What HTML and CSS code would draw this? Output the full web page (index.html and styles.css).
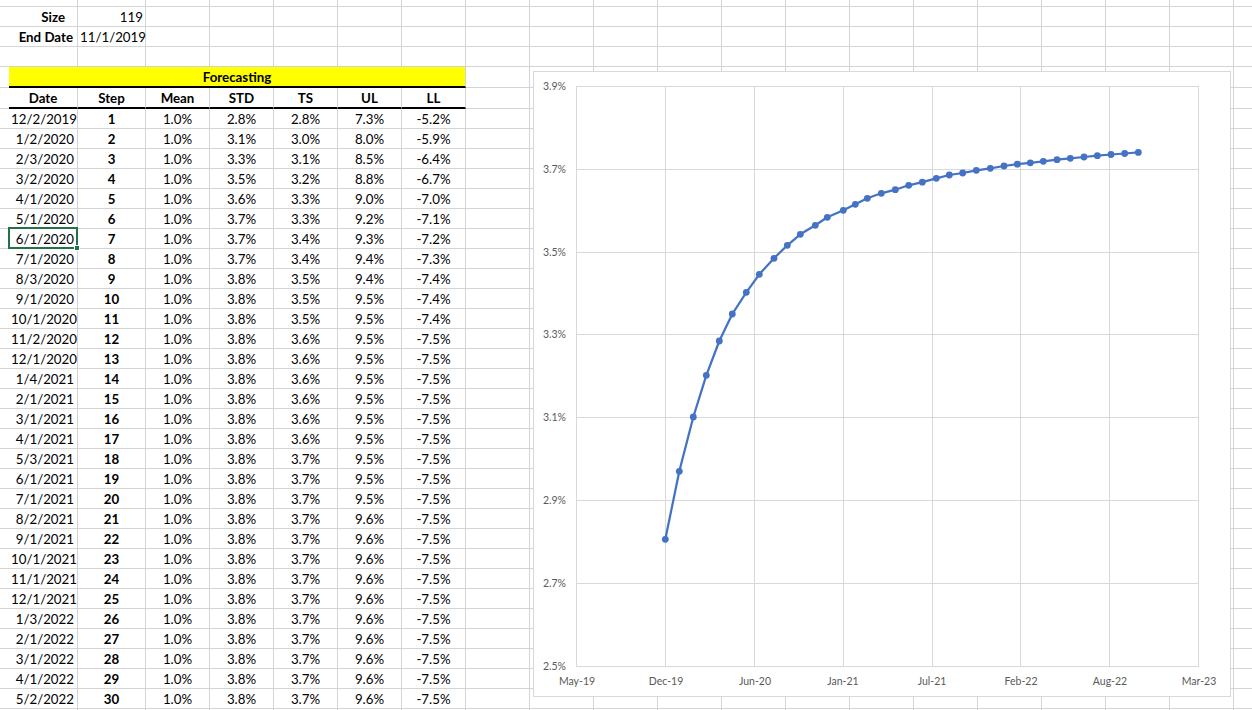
FILE: index.html
```html
<!DOCTYPE html>
<html>
<head>
<meta charset="utf-8">
<title>Forecasting</title>
<link rel="stylesheet" href="styles.css">
</head>
<body>
<div class="sheet">
  <div class="row r0"><div class="c0"></div><div class="c d"></div><div class="c s"></div><div class="c"></div><div class="c"></div><div class="c"></div><div class="c"></div><div class="c"></div><div class="rest"></div></div>
  <div class="row"><div class="c0"></div><div class="c d lbl">Size</div><div class="c s val">119</div><div class="c"></div><div class="c"></div><div class="c"></div><div class="c"></div><div class="c"></div><div class="rest"></div></div>
  <div class="row"><div class="c0"></div><div class="c d lbl2">End Date</div><div class="c s val">11/1/2019</div><div class="c"></div><div class="c"></div><div class="c"></div><div class="c"></div><div class="c"></div><div class="rest"></div></div>
  <div class="row"><div class="c0"></div><div class="c d"></div><div class="c s"></div><div class="c"></div><div class="c"></div><div class="c"></div><div class="c"></div><div class="c"></div><div class="rest"></div></div>
  <div class="row tall"><div class="c0"></div><div class="c fc">Forecasting</div><div class="rest"></div></div>
  <div class="row tall"><div class="c0"></div><div class="c h hd">Date</div><div class="c h hs">Step</div><div class="c h">Mean</div><div class="c h">STD</div><div class="c h">TS</div><div class="c h">UL</div><div class="c h">LL</div><div class="rest"></div></div>
  <div class="row"><div class="c0"></div><div class="c d">12/2/2019</div><div class="c s">1</div><div class="c">1.0%</div><div class="c">2.8%</div><div class="c">2.8%</div><div class="c">7.3%</div><div class="c">-5.2%</div><div class="rest"></div></div>
  <div class="row"><div class="c0"></div><div class="c d">1/2/2020</div><div class="c s">2</div><div class="c">1.0%</div><div class="c">3.1%</div><div class="c">3.0%</div><div class="c">8.0%</div><div class="c">-5.9%</div><div class="rest"></div></div>
  <div class="row"><div class="c0"></div><div class="c d">2/3/2020</div><div class="c s">3</div><div class="c">1.0%</div><div class="c">3.3%</div><div class="c">3.1%</div><div class="c">8.5%</div><div class="c">-6.4%</div><div class="rest"></div></div>
  <div class="row"><div class="c0"></div><div class="c d">3/2/2020</div><div class="c s">4</div><div class="c">1.0%</div><div class="c">3.5%</div><div class="c">3.2%</div><div class="c">8.8%</div><div class="c">-6.7%</div><div class="rest"></div></div>
  <div class="row"><div class="c0"></div><div class="c d">4/1/2020</div><div class="c s">5</div><div class="c">1.0%</div><div class="c">3.6%</div><div class="c">3.3%</div><div class="c">9.0%</div><div class="c">-7.0%</div><div class="rest"></div></div>
  <div class="row"><div class="c0"></div><div class="c d">5/1/2020</div><div class="c s">6</div><div class="c">1.0%</div><div class="c">3.7%</div><div class="c">3.3%</div><div class="c">9.2%</div><div class="c">-7.1%</div><div class="rest"></div></div>
  <div class="row"><div class="c0"></div><div class="c d sel">6/1/2020</div><div class="c s">7</div><div class="c">1.0%</div><div class="c">3.7%</div><div class="c">3.4%</div><div class="c">9.3%</div><div class="c">-7.2%</div><div class="rest"></div></div>
  <div class="row"><div class="c0"></div><div class="c d">7/1/2020</div><div class="c s">8</div><div class="c">1.0%</div><div class="c">3.7%</div><div class="c">3.4%</div><div class="c">9.4%</div><div class="c">-7.3%</div><div class="rest"></div></div>
  <div class="row"><div class="c0"></div><div class="c d">8/3/2020</div><div class="c s">9</div><div class="c">1.0%</div><div class="c">3.8%</div><div class="c">3.5%</div><div class="c">9.4%</div><div class="c">-7.4%</div><div class="rest"></div></div>
  <div class="row"><div class="c0"></div><div class="c d">9/1/2020</div><div class="c s">10</div><div class="c">1.0%</div><div class="c">3.8%</div><div class="c">3.5%</div><div class="c">9.5%</div><div class="c">-7.4%</div><div class="rest"></div></div>
  <div class="row"><div class="c0"></div><div class="c d">10/1/2020</div><div class="c s">11</div><div class="c">1.0%</div><div class="c">3.8%</div><div class="c">3.5%</div><div class="c">9.5%</div><div class="c">-7.4%</div><div class="rest"></div></div>
  <div class="row"><div class="c0"></div><div class="c d">11/2/2020</div><div class="c s">12</div><div class="c">1.0%</div><div class="c">3.8%</div><div class="c">3.6%</div><div class="c">9.5%</div><div class="c">-7.5%</div><div class="rest"></div></div>
  <div class="row"><div class="c0"></div><div class="c d">12/1/2020</div><div class="c s">13</div><div class="c">1.0%</div><div class="c">3.8%</div><div class="c">3.6%</div><div class="c">9.5%</div><div class="c">-7.5%</div><div class="rest"></div></div>
  <div class="row"><div class="c0"></div><div class="c d">1/4/2021</div><div class="c s">14</div><div class="c">1.0%</div><div class="c">3.8%</div><div class="c">3.6%</div><div class="c">9.5%</div><div class="c">-7.5%</div><div class="rest"></div></div>
  <div class="row"><div class="c0"></div><div class="c d">2/1/2021</div><div class="c s">15</div><div class="c">1.0%</div><div class="c">3.8%</div><div class="c">3.6%</div><div class="c">9.5%</div><div class="c">-7.5%</div><div class="rest"></div></div>
  <div class="row"><div class="c0"></div><div class="c d">3/1/2021</div><div class="c s">16</div><div class="c">1.0%</div><div class="c">3.8%</div><div class="c">3.6%</div><div class="c">9.5%</div><div class="c">-7.5%</div><div class="rest"></div></div>
  <div class="row"><div class="c0"></div><div class="c d">4/1/2021</div><div class="c s">17</div><div class="c">1.0%</div><div class="c">3.8%</div><div class="c">3.6%</div><div class="c">9.5%</div><div class="c">-7.5%</div><div class="rest"></div></div>
  <div class="row"><div class="c0"></div><div class="c d">5/3/2021</div><div class="c s">18</div><div class="c">1.0%</div><div class="c">3.8%</div><div class="c">3.7%</div><div class="c">9.5%</div><div class="c">-7.5%</div><div class="rest"></div></div>
  <div class="row"><div class="c0"></div><div class="c d">6/1/2021</div><div class="c s">19</div><div class="c">1.0%</div><div class="c">3.8%</div><div class="c">3.7%</div><div class="c">9.5%</div><div class="c">-7.5%</div><div class="rest"></div></div>
  <div class="row"><div class="c0"></div><div class="c d">7/1/2021</div><div class="c s">20</div><div class="c">1.0%</div><div class="c">3.8%</div><div class="c">3.7%</div><div class="c">9.5%</div><div class="c">-7.5%</div><div class="rest"></div></div>
  <div class="row"><div class="c0"></div><div class="c d">8/2/2021</div><div class="c s">21</div><div class="c">1.0%</div><div class="c">3.8%</div><div class="c">3.7%</div><div class="c">9.6%</div><div class="c">-7.5%</div><div class="rest"></div></div>
  <div class="row"><div class="c0"></div><div class="c d">9/1/2021</div><div class="c s">22</div><div class="c">1.0%</div><div class="c">3.8%</div><div class="c">3.7%</div><div class="c">9.6%</div><div class="c">-7.5%</div><div class="rest"></div></div>
  <div class="row"><div class="c0"></div><div class="c d">10/1/2021</div><div class="c s">23</div><div class="c">1.0%</div><div class="c">3.8%</div><div class="c">3.7%</div><div class="c">9.6%</div><div class="c">-7.5%</div><div class="rest"></div></div>
  <div class="row"><div class="c0"></div><div class="c d">11/1/2021</div><div class="c s">24</div><div class="c">1.0%</div><div class="c">3.8%</div><div class="c">3.7%</div><div class="c">9.6%</div><div class="c">-7.5%</div><div class="rest"></div></div>
  <div class="row"><div class="c0"></div><div class="c d">12/1/2021</div><div class="c s">25</div><div class="c">1.0%</div><div class="c">3.8%</div><div class="c">3.7%</div><div class="c">9.6%</div><div class="c">-7.5%</div><div class="rest"></div></div>
  <div class="row"><div class="c0"></div><div class="c d">1/3/2022</div><div class="c s">26</div><div class="c">1.0%</div><div class="c">3.8%</div><div class="c">3.7%</div><div class="c">9.6%</div><div class="c">-7.5%</div><div class="rest"></div></div>
  <div class="row"><div class="c0"></div><div class="c d">2/1/2022</div><div class="c s">27</div><div class="c">1.0%</div><div class="c">3.8%</div><div class="c">3.7%</div><div class="c">9.6%</div><div class="c">-7.5%</div><div class="rest"></div></div>
  <div class="row"><div class="c0"></div><div class="c d">3/1/2022</div><div class="c s">28</div><div class="c">1.0%</div><div class="c">3.8%</div><div class="c">3.7%</div><div class="c">9.6%</div><div class="c">-7.5%</div><div class="rest"></div></div>
  <div class="row"><div class="c0"></div><div class="c d">4/1/2022</div><div class="c s">29</div><div class="c">1.0%</div><div class="c">3.8%</div><div class="c">3.7%</div><div class="c">9.6%</div><div class="c">-7.5%</div><div class="rest"></div></div>
  <div class="row"><div class="c0"></div><div class="c d">5/2/2022</div><div class="c s">30</div><div class="c">1.0%</div><div class="c">3.8%</div><div class="c">3.7%</div><div class="c">9.6%</div><div class="c">-7.5%</div><div class="rest"></div></div>
  <div class="row"><div class="c0"></div><div class="c d"></div><div class="c s"></div><div class="c"></div><div class="c"></div><div class="c"></div><div class="c"></div><div class="c"></div><div class="rest"></div></div>

  <div class="chart">
    <svg class="plot" viewBox="533 71 699 627" width="699" height="627">
      <rect x="533.5" y="71.5" width="697" height="625" fill="#fff" stroke="#d9d9d9"/>
      <g stroke="#d9d9d9" stroke-width="1" fill="none">
        <rect x="576.5" y="86.5" width="622" height="580"/>
        <line x1="576.5" y1="169.5" x2="1198.5" y2="169.5"/>
        <line x1="576.5" y1="252.5" x2="1198.5" y2="252.5"/>
        <line x1="576.5" y1="334.5" x2="1198.5" y2="334.5"/>
        <line x1="576.5" y1="417.5" x2="1198.5" y2="417.5"/>
        <line x1="576.5" y1="500.5" x2="1198.5" y2="500.5"/>
        <line x1="576.5" y1="583.5" x2="1198.5" y2="583.5"/>
        <line x1="665.5" y1="86.5" x2="665.5" y2="666.5"/>
        <line x1="754.5" y1="86.5" x2="754.5" y2="666.5"/>
        <line x1="843.5" y1="86.5" x2="843.5" y2="666.5"/>
        <line x1="932.5" y1="86.5" x2="932.5" y2="666.5"/>
        <line x1="1020.5" y1="86.5" x2="1020.5" y2="666.5"/>
        <line x1="1109.5" y1="86.5" x2="1109.5" y2="666.5"/>
      </g>
      <g class="ylab">
        <text x="566" y="90">3.9%</text>
        <text x="566" y="172.5">3.7%</text>
        <text x="566" y="255.5">3.5%</text>
        <text x="566" y="337.5">3.3%</text>
        <text x="566" y="420.5">3.1%</text>
        <text x="566" y="503.5">2.9%</text>
        <text x="566" y="586.5">2.7%</text>
        <text x="566" y="669.5">2.5%</text>
      </g>
      <g class="xlab">
        <text x="577" y="685">May-19</text>
        <text x="666" y="685">Dec-19</text>
        <text x="755" y="685">Jun-20</text>
        <text x="843" y="685">Jan-21</text>
        <text x="932" y="685">Jul-21</text>
        <text x="1021" y="685">Feb-22</text>
        <text x="1110" y="685">Aug-22</text>
        <text x="1199" y="685">Mar-23</text>
      </g>
      <polyline class="series" points="665.3,539.3 679.3,471.3 693.3,417 706.3,375.3 719.3,341 732.3,314 746.3,292.3 759.3,274.3 774,258.3 787.3,245.3 800.3,234.3 815.3,225.3 827.3,217.3 843.3,210.3 855.3,204.3 867.3,198.3 881.3,193.3 895.3,189.7 908.7,185.3 922.3,182.2 936.3,178.3 949.3,175 962.7,173 976.3,170.3 990.3,168.3 1004,166 1017.3,164.2 1030.3,162.8 1043.3,161.3 1057,159.7 1070.3,158.3 1084,157 1097.3,155.7 1111,154.5 1124.7,153.5 1138.3,152.4"/>
      <g class="dots">
        <circle cx="665.3" cy="539.3" r="3.4"/><circle cx="679.3" cy="471.3" r="3.4"/><circle cx="693.3" cy="417" r="3.4"/><circle cx="706.3" cy="375.3" r="3.4"/><circle cx="719.3" cy="341" r="3.4"/><circle cx="732.3" cy="314" r="3.4"/><circle cx="746.3" cy="292.3" r="3.4"/><circle cx="759.3" cy="274.3" r="3.4"/><circle cx="774" cy="258.3" r="3.4"/><circle cx="787.3" cy="245.3" r="3.4"/><circle cx="800.3" cy="234.3" r="3.4"/><circle cx="815.3" cy="225.3" r="3.4"/><circle cx="827.3" cy="217.3" r="3.4"/><circle cx="843.3" cy="210.3" r="3.4"/><circle cx="855.3" cy="204.3" r="3.4"/><circle cx="867.3" cy="198.3" r="3.4"/><circle cx="881.3" cy="193.3" r="3.4"/><circle cx="895.3" cy="189.7" r="3.4"/><circle cx="908.7" cy="185.3" r="3.4"/><circle cx="922.3" cy="182.2" r="3.4"/><circle cx="936.3" cy="178.3" r="3.4"/><circle cx="949.3" cy="175" r="3.4"/><circle cx="962.7" cy="173" r="3.4"/><circle cx="976.3" cy="170.3" r="3.4"/><circle cx="990.3" cy="168.3" r="3.4"/><circle cx="1004" cy="166" r="3.4"/><circle cx="1017.3" cy="164.2" r="3.4"/><circle cx="1030.3" cy="162.8" r="3.4"/><circle cx="1043.3" cy="161.3" r="3.4"/><circle cx="1057" cy="159.7" r="3.4"/><circle cx="1070.3" cy="158.3" r="3.4"/><circle cx="1084" cy="157" r="3.4"/><circle cx="1097.3" cy="155.7" r="3.4"/><circle cx="1111" cy="154.5" r="3.4"/><circle cx="1124.7" cy="153.5" r="3.4"/><circle cx="1138.3" cy="152.4" r="3.4"/>
      </g>
    </svg>
  </div>
</div>
</body>
</html>
```
FILE: styles.css
```css
html, body {
  margin: 0;
  padding: 0;
  background: #fff;
}
body {
  font-family: Lato, "Liberation Sans", sans-serif;
  font-size: 13.3px;
  color: #000;
}
.sheet {
  position: relative;
  width: 1252px;
  height: 710px;
  overflow: hidden;
}
.row {
  display: flex;
  height: 20px;
}
.row.r0 { height: 7px; }
.row.tall { height: 21px; }

.c0 {
  flex: none;
  width: 9px;
  box-sizing: border-box;
  border-bottom: 1px solid #d4d4d4;
}
.c {
  flex: none;
  width: 64px;
  box-sizing: border-box;
  border-right: 1px solid #d4d4d4;
  border-bottom: 1px solid #d4d4d4;
  line-height: 19px;
  padding: 1px 2px 0;
  text-align: center;
  white-space: nowrap;
}
.c.d {
  width: 69px;
  text-align: right;
  padding-right: 3px;
}
.c.s {
  width: 68px;
  font-weight: 700;
}
.c.lbl {
  font-weight: 700;
  padding-right: 12px;
}
.c.lbl2 {
  font-weight: 700;
  padding-right: 4px;
}
.c.val {
  font-weight: 400;
  text-align: right;
  padding-right: 2px;
}
.c.fc {
  width: 457px;
  background: #ffff00;
  font-weight: 700;
  border-bottom: 2px solid #000;
}
.c.h {
  font-weight: 700;
  border-bottom: 2px solid #000;
}
.c.hd { width: 69px; }
.c.hs { width: 68px; }
.rest {
  flex: 1;
  border-bottom: 1px solid #d4d4d4;
  background: repeating-linear-gradient(to right, transparent 0 63px, #d4d4d4 63px 64px);
}

.sel {
  position: relative;
}
.sel::before {
  content: "";
  position: absolute;
  left: -1px;
  top: -2px;
  right: -1px;
  bottom: -1px;
  border: 2px solid #217346;
}
.sel::after {
  content: "";
  position: absolute;
  right: -3px;
  bottom: -3px;
  width: 4px;
  height: 4px;
  background: #217346;
  border: 1px solid #fff;
}

.chart {
  position: absolute;
  left: 533px;
  top: 71px;
  width: 699px;
  height: 627px;
}
.plot {
  display: block;
}
.ylab text, .xlab text {
  font-family: Lato, "Liberation Sans", sans-serif;
  font-size: 10.5px;
  fill: #595959;
}
.ylab text { text-anchor: end; }
.xlab text { text-anchor: middle; }
.series {
  fill: none;
  stroke: #4472c4;
  stroke-width: 2.25;
  stroke-linejoin: round;
  stroke-linecap: round;
}
.dots circle {
  fill: #4472c4;
}
```
